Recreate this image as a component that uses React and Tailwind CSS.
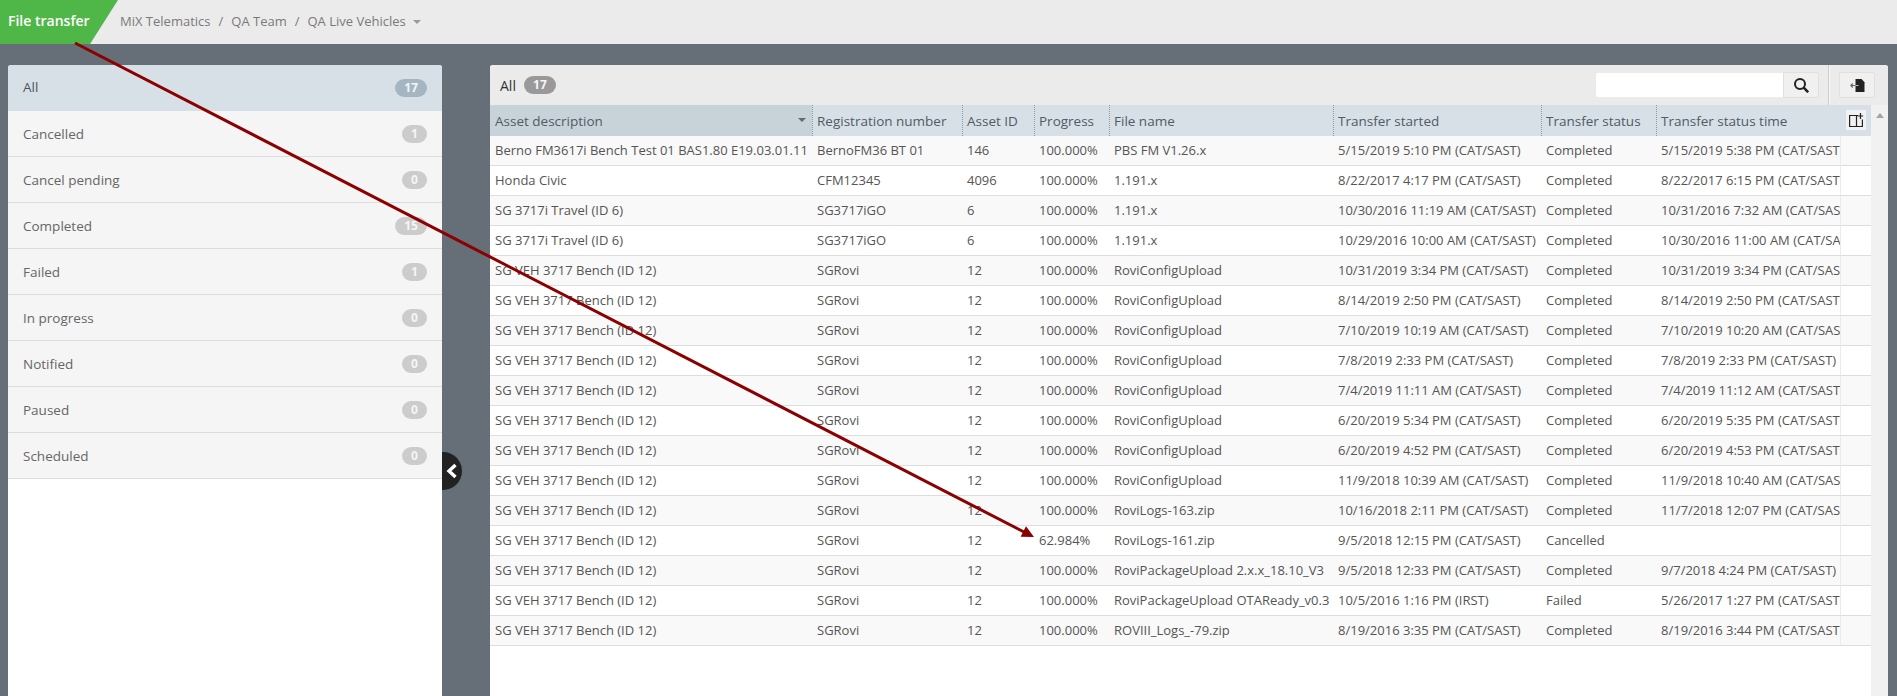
import React from 'react';

const FILTERS = [
  ['All', 17], ['Cancelled', 1], ['Cancel pending', 0], ['Completed', 15], ['Failed', 1],
  ['In progress', 0], ['Notified', 0], ['Paused', 0], ['Scheduled', 0],
];

const COLS = [
  ['Asset description', 322], ['Registration number', 150], ['Asset ID', 72], ['Progress', 75],
  ['File name', 224], ['Transfer started', 208], ['Transfer status', 115], ['Transfer status time', 184],
];

const SG = 'SG VEH 3717 Bench (ID 12)';
const ROWS = [
  ['Berno FM3617i Bench Test 01 BAS1.80 E19.03.01.11', 'BernoFM36 BT 01', '146', '100.000%', 'PBS FM V1.26.x', '5/15/2019 5:10 PM (CAT/SAST)', 'Completed', '5/15/2019 5:38 PM (CAT/SAST)'],
  ['Honda Civic', 'CFM12345', '4096', '100.000%', '1.191.x', '8/22/2017 4:17 PM (CAT/SAST)', 'Completed', '8/22/2017 6:15 PM (CAT/SAST)'],
  ['SG 3717i Travel (ID 6)', 'SG3717iGO', '6', '100.000%', '1.191.x', '10/30/2016 11:19 AM (CAT/SAST)', 'Completed', '10/31/2016 7:32 AM (CAT/SAST)'],
  ['SG 3717i Travel (ID 6)', 'SG3717iGO', '6', '100.000%', '1.191.x', '10/29/2016 10:00 AM (CAT/SAST)', 'Completed', '10/30/2016 11:00 AM (CAT/SAST)'],
  [SG, 'SGRovi', '12', '100.000%', 'RoviConfigUpload', '10/31/2019 3:34 PM (CAT/SAST)', 'Completed', '10/31/2019 3:34 PM (CAT/SAST)'],
  [SG, 'SGRovi', '12', '100.000%', 'RoviConfigUpload', '8/14/2019 2:50 PM (CAT/SAST)', 'Completed', '8/14/2019 2:50 PM (CAT/SAST)'],
  [SG, 'SGRovi', '12', '100.000%', 'RoviConfigUpload', '7/10/2019 10:19 AM (CAT/SAST)', 'Completed', '7/10/2019 10:20 AM (CAT/SAST)'],
  [SG, 'SGRovi', '12', '100.000%', 'RoviConfigUpload', '7/8/2019 2:33 PM (CAT/SAST)', 'Completed', '7/8/2019 2:33 PM (CAT/SAST)'],
  [SG, 'SGRovi', '12', '100.000%', 'RoviConfigUpload', '7/4/2019 11:11 AM (CAT/SAST)', 'Completed', '7/4/2019 11:12 AM (CAT/SAST)'],
  [SG, 'SGRovi', '12', '100.000%', 'RoviConfigUpload', '6/20/2019 5:34 PM (CAT/SAST)', 'Completed', '6/20/2019 5:35 PM (CAT/SAST)'],
  [SG, 'SGRovi', '12', '100.000%', 'RoviConfigUpload', '6/20/2019 4:52 PM (CAT/SAST)', 'Completed', '6/20/2019 4:53 PM (CAT/SAST)'],
  [SG, 'SGRovi', '12', '100.000%', 'RoviConfigUpload', '11/9/2018 10:39 AM (CAT/SAST)', 'Completed', '11/9/2018 10:40 AM (CAT/SAST)'],
  [SG, 'SGRovi', '12', '100.000%', 'RoviLogs-163.zip', '10/16/2018 2:11 PM (CAT/SAST)', 'Completed', '11/7/2018 12:07 PM (CAT/SAST)'],
  [SG, 'SGRovi', '12', '62.984%', 'RoviLogs-161.zip', '9/5/2018 12:15 PM (CAT/SAST)', 'Cancelled', ''],
  [SG, 'SGRovi', '12', '100.000%', 'RoviPackageUpload 2.x.x_18.10_V3', '9/5/2018 12:33 PM (CAT/SAST)', 'Completed', '9/7/2018 4:24 PM (CAT/SAST)'],
  [SG, 'SGRovi', '12', '100.000%', 'RoviPackageUpload OTAReady_v0.3', '10/5/2016 1:16 PM (IRST)', 'Failed', '5/26/2017 1:27 PM (CAT/SAST)'],
  [SG, 'SGRovi', '12', '100.000%', 'ROVIII_Logs_-79.zip', '8/19/2016 3:35 PM (CAT/SAST)', 'Completed', '8/19/2016 3:44 PM (CAT/SAST)'],
];

function Sidebar() {
  return (
    <div className="relative w-[434px] shrink-0 bg-white rounded-t-[3px]">
      {FILTERS.map(([label, count], i) => (
        <div
          key={label}
          className={`h-[46px] flex items-center justify-between px-[15px] text-[13.5px] ${
            i === 0 ? 'bg-[#d7e0e6] text-[#4a5560] rounded-t-[3px]' : 'bg-[#f5f5f5] text-[#666] border-b-[1px] border-[#ddd]'
          }`}
        >
          <span className={i === 0 ? '-mt-[1px]' : 'mt-[1px]'}>{label}</span>
          <span
            className={`h-[18px] rounded-full flex items-center justify-center text-[12px] font-bold text-[#f5f5f5] ${
              count > 9 ? 'w-[32px]' : 'w-[25px]'
            } ${i === 0 ? 'bg-[#a3b6c2]' : 'bg-[#ccc]'}`}
          >
            {count}
          </span>
        </div>
      ))}
      <div className="absolute left-full top-[387px] w-[20px] h-[38px] bg-[#222] rounded-r-full flex items-center justify-center">
        <svg width="12" height="16" viewBox="0 0 12 16" fill="none" stroke="#fff" strokeWidth="3.4">
          <path d="M9.5 2 3 8l6.5 6" />
        </svg>
      </div>
    </div>
  );
}

function Toolbar() {
  return (
    <div className="h-[40px] bg-[#ebebeb] flex items-center pl-[10px]">
      <span className="text-[14px] text-[#333]">All</span>
      <span className="ml-[8px] h-[18px] w-[32px] rounded-full bg-[#999] flex items-center justify-center text-[12px] font-bold text-[#f5f5f5]">17</span>
      <div className="ml-auto flex items-center h-full">
        <input className="w-[187px] h-[24px] -mt-[1px] bg-white rounded-l-[2px] outline-none" />
        <button className="w-[36px] h-[26px] bg-[#f0f0f0] border border-[#e0e0e0] rounded-r-[2px] flex items-center justify-center">
          <svg width="15" height="15" viewBox="0 0 15 15" fill="none" stroke="#222" strokeWidth="2">
            <circle cx="6" cy="6" r="5" />
            <path d="M9.7 9.7 14.2 14.2" strokeWidth="2.6" />
          </svg>
        </button>
        <div className="w-[2px] h-full border-l-[1px] border-r-[1px] border-l-[#ccc] border-r-[#f7f7f7] ml-[9px]" />
        <button className="ml-[9px] mr-[13px] w-[36px] h-[26px] bg-[#f0f0f0] border border-[#e0e0e0] rounded-[2px] flex items-center justify-center">
          <svg width="15" height="13" viewBox="0 0 15 13">
            <path d="M5.5 0h6l3 3.2V13h-9z" fill="#222" />
            <path d="M0.5 6.5H5.5M2.8 4.5 0.8 6.5l2 2" fill="none" stroke="#666" strokeWidth="1.2" />
            <path d="M5.5 6.5H8.5" stroke="#bbb" strokeWidth="1.2" />
          </svg>
        </button>
      </div>
    </div>
  );
}

function Grid() {
  return (
    <div className="flex flex-1 min-h-0">
      <div className="w-[1381px] shrink-0">
        <table className="table-fixed w-[1381px] border-separate border-spacing-0 text-[13px] text-[#555]">
          <colgroup>
            {COLS.map(([name, w]) => <col key={name} style={{ width: w }} />)}
            <col style={{ width: 31 }} />
          </colgroup>
          <thead>
            <tr className="h-[31px]">
              {COLS.map(([name], i) => (
                <th
                  key={name}
                  className={`relative pr-0 pt-[1px] text-left text-[13.5px] font-normal text-[#4f5b66] whitespace-nowrap overflow-hidden ${
                    i === 0 ? 'pl-[5px] bg-[#c8d3d9]' : 'pl-[4px] bg-[#d7e0e6] border-l-[1px] border-dotted border-[#8c9aa3]'
                  }`}
                >
                  {name}
                  {i === 0 && (
                    <span className="absolute right-[6px] top-[13px] w-0 h-0 border-x-[4px] border-x-transparent border-t-[4px] border-t-[#5f6b74]" />
                  )}
                </th>
              ))}
              <th className="bg-[#d7e0e6] p-0 align-top">
                <div className="ml-[6px] mt-[5px] w-[20px] h-[20px] bg-[#f2f2f2] flex items-center justify-center">
                  <svg width="15" height="14" viewBox="0 0 15 14" fill="none" stroke="#222" strokeWidth="1.2">
                    <path d="M9 2.5H.6v11h12.8V6.5" />
                    <path d="M7.5 2.5v11" />
                    <path d="M11.5 0v6M8.8 3h5.4" />
                  </svg>
                </div>
              </th>
            </tr>
          </thead>
          <tbody>
            {ROWS.map((row, r) => (
              <tr key={r} className={`h-[30px] ${r % 2 === 0 ? 'bg-[#f9f9f9]' : 'bg-white'}`}>
                {row.map((cell, c) => (
                  <td key={c} className="pl-[5px] pr-0 border-b-[1px] border-[#ddd] whitespace-nowrap overflow-hidden">{cell}</td>
                ))}
                <td className="border-l-[1px] border-b-[1px] border-l-[#ebebeb] border-b-[#ddd]" />
              </tr>
            ))}
          </tbody>
        </table>
      </div>
      <div className="w-[17px] shrink-0 bg-[#f1f1f1] flex justify-center pt-[8px]">
        <span className="w-0 h-0 border-x-[4px] border-x-transparent border-b-[5px] border-b-[#a3a3a3]" />
      </div>
    </div>
  );
}

export default function App() {
  return (
    <div className="relative h-[696px] overflow-hidden flex flex-col bg-[#666e78] font-['Open_Sans',sans-serif]">
      <header className="h-[44px] shrink-0 bg-[#ebebeb] flex items-center">
        <div className="h-full w-[118px] pl-[8px] pb-[4px] bg-[#4fb748] text-white text-[14px] font-semibold flex items-center [clip-path:polygon(0_0,100%_0,76.3%_100%,0_100%)]">
          File transfer
        </div>
        <nav className="ml-[2px] flex items-center text-[13px] text-[#7a7a7a]">
          <span>MiX Telematics</span>
          <span className="mx-[8px]">/</span>
          <span>QA Team</span>
          <span className="mx-[8px]">/</span>
          <span>QA Live Vehicles</span>
          <span className="ml-[7px] w-0 h-0 border-x-[4px] border-x-transparent border-t-[4px] border-t-[#9a9a9a]" />
        </nav>
      </header>
      <main className="flex-1 min-h-0 flex pt-[21px] pl-[8px] pr-[9px] gap-[48px]">
        <Sidebar />
        <section className="flex-1 min-w-0 bg-white rounded-t-[3px] flex flex-col overflow-hidden">
          <Toolbar />
          <Grid />
        </section>
      </main>
      <svg className="absolute inset-0 pointer-events-none" width="1897" height="696" viewBox="0 0 1897 696">
        <line x1="75" y1="43" x2="1024" y2="532" stroke="#8b0000" strokeWidth="3" />
        <path d="M1034 537 1020.6 536.8 1026 526.2Z" fill="#8b0000" />
      </svg>
    </div>
  );
}
